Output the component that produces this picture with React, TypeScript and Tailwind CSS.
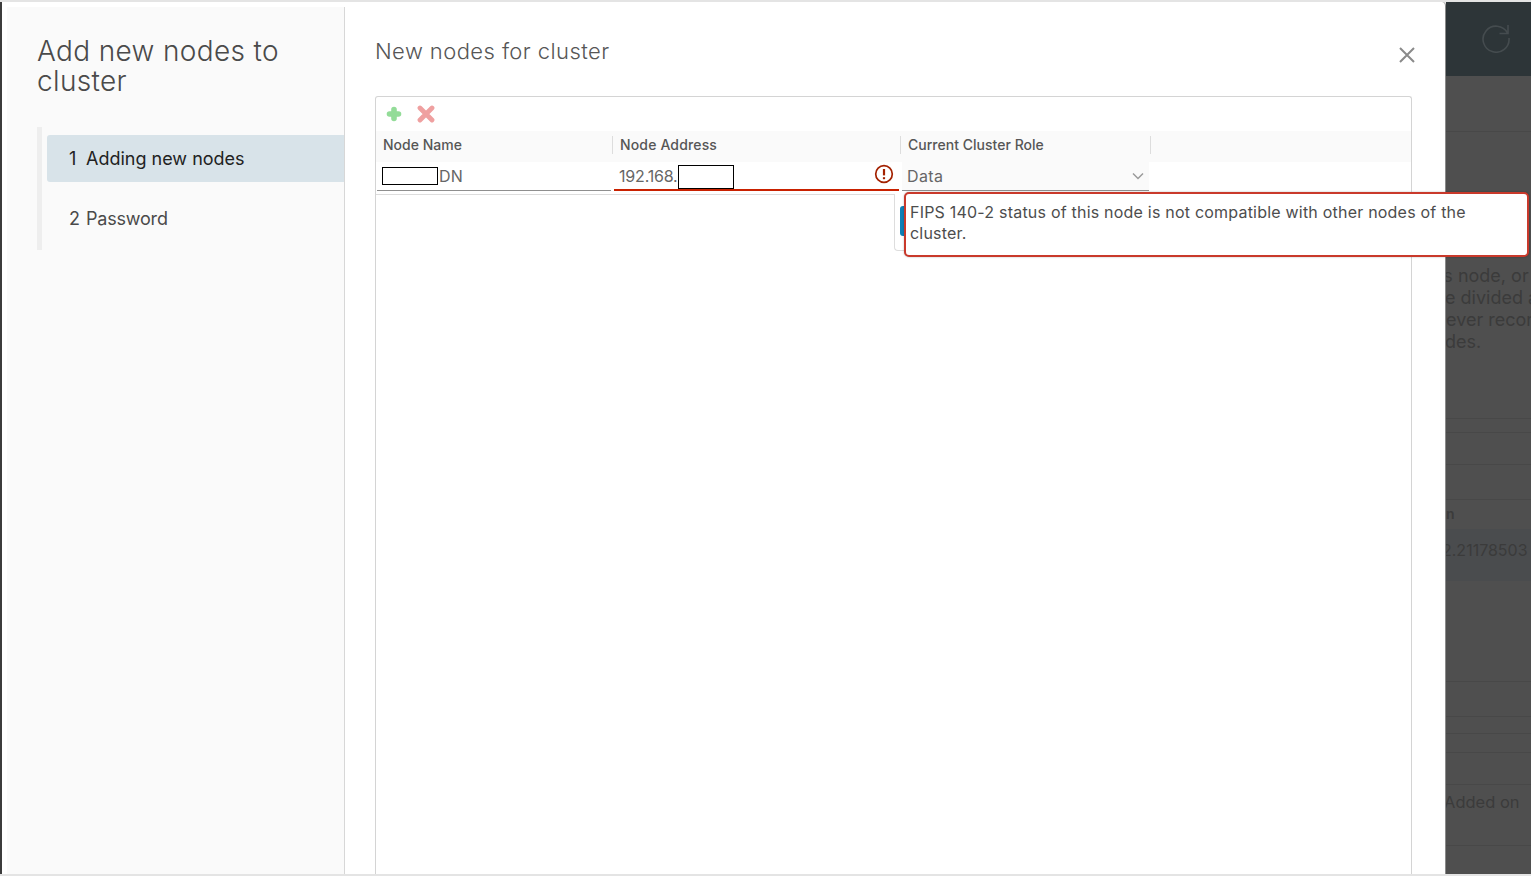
export default function App() {
  const font = { fontFamily: "Inter, 'Noto Sans', sans-serif" };
  return (
    <div className="relative flex h-[876px] w-[1531px] flex-col overflow-hidden bg-[#e4e4e4] pt-[2px] pb-[2px]" style={font}>
      <div className="flex min-h-0 flex-1">
        {/* Modal */}
        <div className="flex w-[1446px] shrink-0 rounded-tr-[4px] border-l-2 border-l-[#3c3c3c] border-r border-r-[#8a8a8a] bg-white pl-[5px] pt-[5px]">
          <aside className="flex w-[338px] shrink-0 flex-col border-r border-[#d7d7d7] bg-[#fafafa] pl-[30px] pt-[29px]">
            <h1 className="text-[28px] font-light leading-[30px] tracking-[0.35px] text-[#4a4a4a]">
              Add new nodes to
              <br />
              cluster
            </h1>
            <div className="mt-[31px] h-[123px] border-l-[5px] border-[#eeeeee] pl-[5px] pt-[8px]">
              <div className="flex h-[47px] items-center rounded-l-[3px] bg-[#d8e3e9] pb-[1px] pl-[22px] text-[18px] text-[#222222]">
                <span className="w-[17px]">1</span>
                <span>Adding new nodes</span>
              </div>
              <div className="flex h-[73px] items-center pl-[22px] text-[18px] tracking-[-0.2px] text-[#4a4a4a]">
                <span className="w-[17px]">2</span>
                <span>Password</span>
              </div>
            </div>
          </aside>
          <main className="flex min-w-0 flex-1 flex-col pl-[30px] pr-[33px] pt-[30px]">
            <div className="flex h-[31px] items-start justify-between">
              <h2 className="text-[22px] font-light leading-[28px] tracking-[0.42px] text-[#565656]">New nodes for cluster</h2>
              <svg width="16" height="16" viewBox="0 0 16 16" className="mr-[-3px] mt-[10px]" fill="none" stroke="#8a8a8a" strokeWidth="2">
                <path d="M1 1 15 15M15 1 1 15" />
              </svg>
            </div>
            <section className="mt-[28px] flex min-h-0 flex-1 flex-col rounded-t-[3px] border border-b-0 border-[#d4d4d4]">
              <div className="flex h-[34px] shrink-0 items-center gap-[15px] pl-[10px]">
                <svg width="16" height="16" viewBox="0 0 16 16" fill="none" stroke="#93dc98" strokeWidth="5.6" strokeLinecap="round">
                  <path d="M8 3.500v9M3.500 8h9" />
                </svg>
                <svg width="18" height="18" viewBox="0 0 18 18" fill="none" stroke="#efa0a0" strokeWidth="4.8" strokeLinecap="round">
                  <path d="M3 3 15 15M15 3 3 15" />
                </svg>
              </div>
              <div className="flex h-[31px] shrink-0 items-center bg-[#fafafa] pb-[3px] text-[14px] font-medium tracking-[0.02px] text-[#565656]">
                <div className="w-[237px] border-r border-[#dddddd] pl-[7px] leading-[18px]">Node Name</div>
                <div className="w-[288px] border-r border-[#dddddd] pl-[7px] leading-[18px] tracking-[0.15px]">Node Address</div>
                <div className="w-[250px] border-r border-[#dddddd] pl-[7px] leading-[18px]">Current Cluster Role</div>
              </div>
              <div className="flex h-[33px] shrink-0 border-b border-[#dddddd] text-[16px] tracking-[0.2px] text-[#666666]">
                <div className="ml-[1px] flex h-[29px] w-[234px] items-center border-b border-[#8f8f8f] pl-[5px]">
                  <span className="h-[18px] w-[56px] border border-black bg-white" />
                  <span className="ml-[1px]">DN</span>
                </div>
                <div className="ml-[3px] flex h-[29px] w-[285px] items-center border-b-2 border-[#c92100] pl-[5px]">
                  <span className="tracking-[-0.18px]">192.168.</span>
                  <span className="mt-[3px] h-[24px] w-[56px] border border-black bg-white" />
                  <svg width="20" height="20" viewBox="0 0 20 20" className="ml-auto mb-[4px] mr-[5px]" fill="none" stroke="#a32100">
                    <circle cx="10" cy="10" r="8.3" strokeWidth="1.7" />
                    <path d="M10 5v6.400" strokeWidth="2.2" />
                    <path d="M10 13.200v2" strokeWidth="2.2" />
                  </svg>
                </div>
                <div className="ml-[3px] flex h-[29px] w-[247px] items-center justify-between border-b border-[#8f8f8f] bg-[#fafafa] pl-[5px] pr-[5px] tracking-[0.4px]">
                  <span>Data</span>
                  <svg width="12" height="8" viewBox="0 0 12 8" fill="none" stroke="#9a9a9a" strokeWidth="1.5">
                    <path d="M1 1.500 6 6.500 11 1.500" />
                  </svg>
                </div>
              </div>
            </section>
          </main>
        </div>

        {/* Dimmed page behind the modal */}
        <div className="flex min-w-0 flex-1 flex-col overflow-hidden bg-[#4f4f4f] text-[18px] text-[#3b3b3b]">
          <div className="flex h-[74px] shrink-0 items-center bg-[#2d3538] pl-[35px] pb-[2px]">
            <svg width="30" height="30" viewBox="0 0 30 30" fill="none" stroke="#454c4f" strokeWidth="1.6">
              <path d="M26.500 10A13 13 0 1 0 28 15" />
              <path d="M27 2v8.500h-8.500" />
            </svg>
          </div>
          <div className="h-[56px] shrink-0 border-b border-[#484848]" />
          <div className="h-[133px] shrink-0" />
          <div className="shrink-0 whitespace-nowrap leading-[22px]">
            <p className="-ml-[7px]">is node, or</p>
            <p className="-ml-[1px]">e divided a</p>
            <p>ever recom</p>
            <p className="-ml-[1px]">des.</p>
          </div>
          <div className="h-[66px] shrink-0 border-b border-[#484848]" />
          <div className="h-[14px] shrink-0 border-b border-[#484848]" />
          <div className="h-[32px] shrink-0 border-b border-[#484848]" />
          <div className="h-[35px] shrink-0 border-b border-[#484848]" />
          <div className="flex h-[29px] shrink-0 items-center pb-[3px] text-[14px] font-semibold">n</div>
          <div className="flex h-[52px] shrink-0 items-center whitespace-nowrap bg-[#4a4c4e] pb-[10px] text-[16px]">
            <span className="-ml-[4px]">2.21178503</span>
          </div>
          <div className="h-[101px] shrink-0 border-b border-[#484848]" />
          <div className="h-[35px] shrink-0 border-b border-[#484848]" />
          <div className="h-[17px] shrink-0 border-b border-[#484848]" />
          <div className="h-[19px] shrink-0 border-b border-[#484848]" />
          <div className="h-[32px] shrink-0 border-b border-[#484848]" />
          <div className="-ml-[2px] h-[61px] shrink-0 whitespace-nowrap border-b border-[#484848] pt-[5px] text-[16.500px]">Added on</div>
          <div className="flex-1" />
        </div>
      </div>

      {/* Select menu peeking out from under the tooltip */}
      <div className="absolute left-[894px] top-[194px] h-[57px] w-[30px] rounded-bl-[4px] border-b border-l border-[#dddddd] bg-white pl-[5px] pt-[12px]">
        <div className="h-[30px] w-[10px] rounded-l-[3px] bg-[#0f7fb5]" />
      </div>

      {/* Validation tooltip */}
      <div className="absolute left-[904px] top-[192px] h-[65px] w-[625px] rounded-[5px] border-2 border-[#c9392b] bg-white pl-[4px] pt-[8px] text-[16px] leading-[21px] tracking-[0.21px] text-[#4d4d4d] shadow-[0_0_2px_rgba(0,0,0,0.3)]">
        FIPS 140-2 status of this node is not compatible with other nodes of the
        <br />
        cluster.
      </div>
    </div>
  );
}
